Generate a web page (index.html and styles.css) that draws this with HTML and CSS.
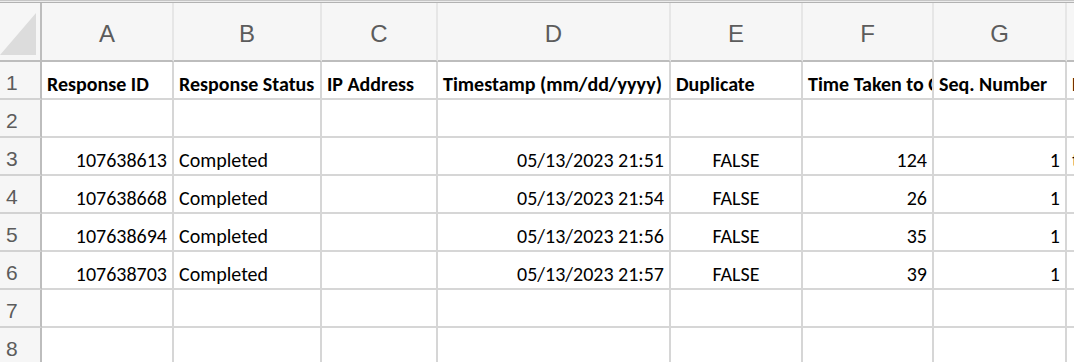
FILE: index.html
```html
<!DOCTYPE html>
<html lang="en">
<head>
<meta charset="utf-8">
<title>Sheet</title>
<link rel="stylesheet" href="styles.css">
</head>
<body>
<div class="topbar"></div>
<div class="sheet">
  <div class="row head">
    <div class="corner">
      <svg width="40" height="57" viewBox="0 0 40 57"><polygon points="0,52 36,52 36,10" fill="#dcdcdc"/></svg>
    </div>
    <div class="colhead">A</div>
    <div class="colhead">B</div>
    <div class="colhead">C</div>
    <div class="colhead">D</div>
    <div class="colhead">E</div>
    <div class="colhead">F</div>
    <div class="colhead">G</div>
    <div class="colhead">H</div>
  </div>
  <div class="row">
    <div class="rownum">1</div>
    <div class="cell b">Response ID</div>
    <div class="cell b">Response Status</div>
    <div class="cell b">IP Address</div>
    <div class="cell b">Timestamp (mm/dd/yyyy)</div>
    <div class="cell b">Duplicate</div>
    <div class="cell b">Time Taken to Complete (Seconds)</div>
    <div class="cell b">Seq. Number</div>
    <div class="cell b">External Reference</div>
  </div>
  <div class="row">
    <div class="rownum">2</div>
    <div class="cell"></div><div class="cell"></div><div class="cell"></div><div class="cell"></div>
    <div class="cell"></div><div class="cell"></div><div class="cell"></div><div class="cell"></div>
  </div>
  <div class="row">
    <div class="rownum">3</div>
    <div class="cell r">107638613</div>
    <div class="cell">Completed</div>
    <div class="cell"></div>
    <div class="cell r">05/13/2023 21:51</div>
    <div class="cell c">FALSE</div>
    <div class="cell r">124</div>
    <div class="cell r">1</div>
    <div class="cell">test</div>
  </div>
  <div class="row">
    <div class="rownum">4</div>
    <div class="cell r">107638668</div>
    <div class="cell">Completed</div>
    <div class="cell"></div>
    <div class="cell r">05/13/2023 21:54</div>
    <div class="cell c">FALSE</div>
    <div class="cell r">26</div>
    <div class="cell r">1</div>
    <div class="cell"></div>
  </div>
  <div class="row">
    <div class="rownum">5</div>
    <div class="cell r">107638694</div>
    <div class="cell">Completed</div>
    <div class="cell"></div>
    <div class="cell r">05/13/2023 21:56</div>
    <div class="cell c">FALSE</div>
    <div class="cell r">35</div>
    <div class="cell r">1</div>
    <div class="cell"></div>
  </div>
  <div class="row">
    <div class="rownum">6</div>
    <div class="cell r">107638703</div>
    <div class="cell">Completed</div>
    <div class="cell"></div>
    <div class="cell r">05/13/2023 21:57</div>
    <div class="cell c">FALSE</div>
    <div class="cell r">39</div>
    <div class="cell r">1</div>
    <div class="cell"></div>
  </div>
  <div class="row">
    <div class="rownum">7</div>
    <div class="cell"></div><div class="cell"></div><div class="cell"></div><div class="cell"></div>
    <div class="cell"></div><div class="cell"></div><div class="cell"></div><div class="cell"></div>
  </div>
  <div class="row">
    <div class="rownum">8</div>
    <div class="cell"></div><div class="cell"></div><div class="cell"></div><div class="cell"></div>
    <div class="cell"></div><div class="cell"></div><div class="cell"></div><div class="cell"></div>
  </div>
</div>
</body>
</html>
```

FILE: styles.css
```css
* { box-sizing: border-box; }
html, body { margin: 0; padding: 0; background: #ffffff; overflow: hidden; }
body { width: 1074px; height: 362px; }

.topbar {
  width: 1074px;
  height: 3px;
  border-top: 1px solid #c6c6c6;
  border-bottom: 1px solid #b2b2b2;
  background: #ececec;
}

.sheet {
  display: flex;
  flex-direction: column;
  width: 1074px;
  overflow: hidden;
}

.row {
  display: grid;
  grid-template-columns: 42px 132px 148px 116px 233px 132px 131px 133px 140px;
  width: 1207px;
  height: 38px;
}
.row.head { height: 59px; }

.corner {
  background: #f6f6f6;
  border-right: 2px solid #bdbdbd;
  border-bottom: 2px solid #bdbdbd;
  display: flex;
}
.corner svg { display: block; }

.colhead {
  background: #f6f6f6;
  border-right: 2px solid #e6e6e6;
  border-bottom: 2px solid #bdbdbd;
  font-family: "Liberation Sans", Arial, sans-serif;
  font-size: 24px;
  color: #5c5c5c;
  display: flex;
  align-items: center;
  justify-content: center;
  padding-top: 4px;
}

.rownum {
  background: #f6f6f6;
  border-right: 2px solid #bdbdbd;
  border-bottom: 2px solid #d2d2d2;
  font-family: "Liberation Sans", Arial, sans-serif;
  font-size: 21px;
  line-height: 21px;
  color: #5c5c5c;
  display: flex;
  align-items: flex-end;
  padding: 0 0 5px 6px;
}

.cell {
  border-right: 2px solid #d6d6d6;
  border-bottom: 2px solid #d6d6d6;
  font-family: Carlito, Calibri, "Liberation Sans", sans-serif;
  font-size: 20px;
  line-height: 20px;
  color: #000;
  display: flex;
  align-items: flex-end;
  padding: 0 5px 4px 5px;
  white-space: nowrap;
  overflow: hidden;
}
.cell.b { font-weight: bold; }
.cell.r { justify-content: flex-end; }
.cell.c { justify-content: center; }
```
